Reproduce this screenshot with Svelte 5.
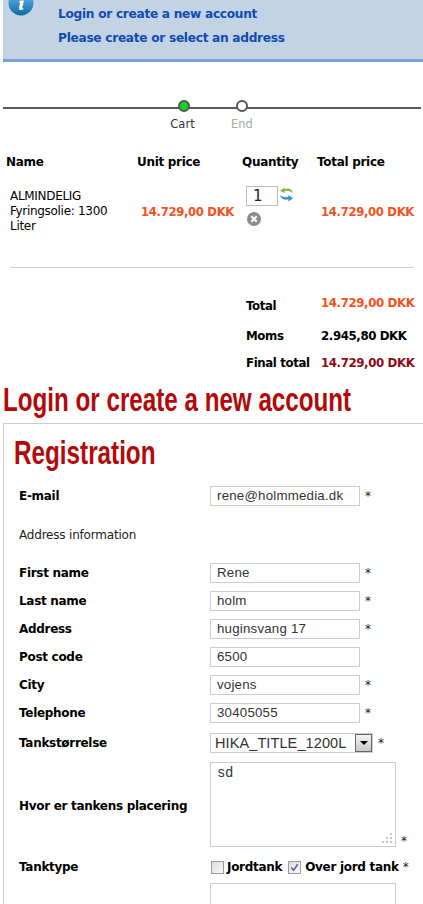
<script>
  const fields = [
    { label: "First name", value: "Rene", req: true },
    { label: "Last name", value: "holm", req: true },
    { label: "Address", value: "huginsvang 17", req: true },
    { label: "Post code", value: "6500", req: false },
    { label: "City", value: "vojens", req: true },
    { label: "Telephone", value: "30405055", req: true }
  ];
</script>

<div class="page">
  <!-- Info banner -->
  <div class="banner">
    <svg class="info" viewBox="0 0 26 26" width="26" height="26">
      <defs>
        <linearGradient id="ig" x1="0" y1="0" x2="0" y2="1">
          <stop offset="0" stop-color="#6fc0ea" />
          <stop offset="1" stop-color="#0d6aa8" />
        </linearGradient>
      </defs>
      <circle cx="13" cy="13" r="12.5" fill="url(#ig)" />
      <path d="M14.5 5.5h3.4l-.7 3h-3.4zM12.6 10.5h3.4l-1.700 7.200c-.1.5.3.6 1.200.2l-.2 1.400c-1.800.9-4.600 1-4.300-1.200l1.200-5.600-1 .1.2-1.400z" fill="#fff" />
    </svg>
    <p>Login or create a new account</p>
    <p>Please create or select an address</p>
  </div>

  <!-- Checkout steps -->
  <div class="steps">
    <div class="step"><span class="dot green"></span><span class="step-label">Cart</span></div>
    <div class="step end"><span class="dot"></span><span>End</span></div>
  </div>

  <!-- Cart -->
  <div class="cart-head">
    <span>Name</span>
    <span>Unit price</span>
    <span>Quantity</span>
    <span>Total price</span>
  </div>
  <div class="cart-row">
    <div class="item">ALMINDELIG<br />Fyringsolie: 1300<br />Liter</div>
    <div class="price">14.729,00 DKK</div>
    <div class="qty">
      <div class="qty-top">
        <span class="qty-box">1</span>
        <svg viewBox="0 0 16 16" width="15" height="16">
          <path d="M15 7C14 3 10 1 6 3V1L1 4.500 6 7V5c3-1 6 0 9 2z" fill="#7fb33c" />
          <path d="M1 9c3 2 6 3 9 2V9l5 3.500-5 3.500v-2.300C6 15 2 13 1 9z" fill="#3b8fd6" />
        </svg>
      </div>
      <svg class="remove" viewBox="0 0 14 14" width="14" height="14">
        <circle cx="7" cy="7" r="7" fill="#8c8c8c" />
        <path d="M4.300 4.300l5.400 5.400M9.700 4.300l-5.400 5.400" stroke="#fff" stroke-width="2" />
      </svg>
    </div>
    <div class="price">14.729,00 DKK</div>
  </div>
  <hr />

  <div class="sums">
    <div class="sum s1"><b>Total</b><b class="orange">14.729,00 DKK</b></div>
    <div class="sum s2"><b>Moms</b><b>2.945,80 DKK</b></div>
    <div class="sum s3"><b>Final total</b><b class="dark">14.729,00 DKK</b></div>
  </div>

  <h1><span>Login or create a new account</span></h1>

  <!-- Registration form -->
  <div class="box">
    <h2><span>Registration</span></h2>
    <div class="row">
      <label>E-mail</label>
      <span class="input">rene@holmmedia.dk</span>
      <span class="star">*</span>
    </div>
    <div class="section">Address information</div>
    {#each fields as f}
      <div class="row">
        <label>{f.label}</label>
        <span class="input">{f.value}</span>
        {#if f.req}<span class="star">*</span>{/if}
      </div>
    {/each}
    <div class="row select-row">
      <label>Tankstørrelse</label>
      <span class="select">
        HIKA_TITLE_1200L
        <span class="arrow"></span>
      </span>
      <span class="star">*</span>
    </div>
    <div class="row area-row">
      <label>Hvor er tankens placering</label>
      <span class="area">sd
        <svg viewBox="0 0 12 12" width="12" height="12">
          <g fill="#c4c4c4">
            <rect x="9" y="1" width="2" height="2" /><rect x="5" y="5" width="2" height="2" />
            <rect x="9" y="5" width="2" height="2" /><rect x="1" y="9" width="2" height="2" />
            <rect x="5" y="9" width="2" height="2" /><rect x="9" y="9" width="2" height="2" />
          </g>
        </svg>
      </span>
      <span class="star">*</span>
    </div>
    <div class="row check-row">
      <label>Tanktype</label>
      <span class="checks">
        <span class="check"></span><b>Jordtank</b>
        <span class="check on">
          <svg viewBox="0 0 12 12" width="11" height="11"><path d="M2.500 6l2.500 3 4.500-6.500" fill="none" stroke="#4a5fa8" stroke-width="1.600" /></svg>
        </span><b>Over jord tank</b>
        <span class="star">*</span>
      </span>
    </div>
    <div class="row last-row">
      <label></label>
      <span class="area"></span>
    </div>
  </div>
</div>

<style>
  :global(body) {
    margin: 0;
    background: #fff;
  }

  .page {
    width: 423px;
    height: 904px;
    overflow: hidden;
    position: relative;
    font-family: "DejaVu Sans", sans-serif;
    font-size: 12px;
    color: #000;
  }

  .banner {
    margin-left: 3px;
    height: 59px;
    background: #c3d3e6;
    border-bottom: 3px solid #7ba0cf;
    padding-left: 55px;
    position: relative;
  }

  .banner p {
    margin: 0;
    padding-top: 6px;
    height: 18px;
    line-height: 16px;
    font-size: 12.2px;
    font-weight: bold;
    color: #0f4cad;
    letter-spacing: -0.3px;
  }

  .info {
    position: absolute;
    left: 5px;
    top: -10px;
  }

  .steps {
    margin: 39px 2px 0 3px;
    height: 6px;
    border-bottom: 2px solid #5a5a5a;
    display: flex;
    gap: 8px;
    padding-left: 156px;
    align-items: flex-start;
  }

  .step {
    width: 50px;
    display: flex;
    flex-direction: column;
    align-items: center;
    gap: 5px;
    font-size: 11.5px;
    line-height: 14px;
    color: #333;
  }

  .step-label {
    margin-left: -3px;
  }

  .step.end {
    color: #aaa;
  }

  .dot {
    width: 8px;
    height: 8px;
    border: 2px solid #555;
    border-radius: 50%;
    background: #fff;
    margin-top: -1px;
  }

  .dot.green {
    background: #12d41c;
  }

  .cart-head,
  .cart-row {
    display: grid;
    grid-template-columns: 131px 105px 75px auto;
  }

  .cart-head {
    margin-top: 45px;
    height: 27px;
    padding-left: 6px;
    font-weight: bold;
    letter-spacing: -0.3px;
    line-height: 16px;
  }

  .cart-row {
    align-items: center;
    padding-left: 10px;
    height: 61px;
  }

  .item {
    line-height: 15px;
    letter-spacing: -0.3px;
  }

  .price {
    color: #f4511e;
    font-weight: bold;
    font-size: 11.6px;
    letter-spacing: -0.3px;
    white-space: nowrap;
  }

  .qty {
    align-self: start;
    margin-top: 5px;
  }

  .qty-top {
    display: flex;
    gap: 1px;
  }

  .qty-box {
    width: 32px;
    height: 20px;
    box-sizing: border-box;
    border: 1px solid #bbb;
    padding-left: 6px;
    font-size: 15px;
    line-height: 19px;
    color: #222;
  }

  .remove {
    display: block;
    margin-top: 6px;
    margin-left: 1px;
  }

  hr {
    margin: 25px 9px 0 10px;
    border: 0;
    border-top: 1px solid #ccc;
    height: 0;
  }

  .sums {
    padding-left: 246px;
    margin-top: 27px;
  }

  .sum {
    display: flex;
    font-size: 11.8px;
    letter-spacing: -0.4px;
    line-height: 16px;
  }

  .sum b:first-child {
    width: 75px;
  }

  .s1 { height: 33px; }
  .s2 { height: 27px; }
  .s3 { height: 16px; }

  .s1 b:first-child {
    padding-top: 3px;
  }

  .orange { color: #f4511e; }
  .dark { color: #8e0a14; }

  h1, h2 {
    margin: 0;
    color: #b20a0a;
    font-family: "Liberation Sans", sans-serif;
    font-weight: bold;
    white-space: nowrap;
  }

  h1 span, h2 span {
    display: inline-block;
    transform-origin: left center;
  }

  h1 {
    font-size: 33px;
    line-height: 40px;
    margin-top: 9px;
    margin-left: 3px;
  }

  h1 span {
    transform: scaleX(0.733);
  }

  .box {
    margin: 3px 0 0 3px;
    border: 1px solid #ccc;
    border-right: 0;
    padding-left: 15px;
    height: 600px;
  }

  h2 {
    font-size: 33px;
    line-height: 40px;
    margin-left: -5px;
    margin-top: 9px;
    margin-bottom: 13px;
  }

  h2 span {
    transform: scaleX(0.735);
  }

  .row {
    display: flex;
    align-items: center;
    height: 20px;
    margin-bottom: 8px;
    font-weight: bold;
    letter-spacing: -0.3px;
  }

  label {
    width: 191px;
    flex: none;
  }

  .area-row label {
    padding-top: 2px;
  }

  .input {
    width: 150px;
    height: 20px;
    box-sizing: border-box;
    border: 1px solid #ccc;
    padding-left: 6px;
    font-family: "Liberation Sans", sans-serif;
    font-size: 13.3px;
    font-weight: normal;
    letter-spacing: 0.2px;
    line-height: 18px;
    color: #333;
    white-space: nowrap;
  }

  .star {
    margin-left: 5px;
    margin-top: 2px;
    font-weight: normal;
    color: #222;
    align-self: flex-start;
    line-height: 16px;
  }

  .section {
    height: 49px;
    padding-top: 13px;
    box-sizing: border-box;
    line-height: 16px;
    letter-spacing: -0.2px;
    color: #222;
  }

  .select {
    width: 163px;
    height: 20px;
    box-sizing: border-box;
    border: 1px solid #ccc;
    padding-left: 4px;
    font-family: "Liberation Sans", sans-serif;
    font-size: 14.5px;
    font-weight: normal;
    line-height: 19px;
    letter-spacing: 0.1px;
    color: #333;
    position: relative;
    white-space: nowrap;
  }

  .arrow {
    position: absolute;
    right: 0;
    top: 0;
    width: 17px;
    height: 18px;
    box-sizing: border-box;
    border: 1px solid #666;
    background: linear-gradient(#f4f4f4, #c8c8c8);
  }

  .arrow::after {
    content: "";
    position: absolute;
    left: 4px;
    top: 6px;
    border: 4px solid transparent;
    border-top: 4px solid #000;
  }

  .select-row {
    margin-top: 10px;
    margin-bottom: 9px;
  }

  .area-row {
    height: 85px;
    margin-bottom: 10px;
  }

  .area {
    width: 186px;
    height: 85px;
    box-sizing: border-box;
    border: 1px solid #ccc;
    padding: 2px 6px;
    font-family: "Liberation Mono", monospace;
    font-size: 14px;
    font-weight: normal;
    color: #333;
    position: relative;
    flex: none;
  }

  .area svg {
    position: absolute;
    right: 2px;
    bottom: 2px;
  }

  .area-row .star {
    align-self: flex-end;
    margin-bottom: -2px;
  }

  .check-row {
    margin-bottom: 6px;
  }

  .checks {
    display: flex;
    align-items: center;
    white-space: nowrap;
    font-size: 12px;
    padding-left: 1px;
  }

  .check {
    width: 13px;
    height: 13px;
    box-sizing: border-box;
    border: 1px solid #9a9a9a;
    background: linear-gradient(135deg, #ddd, #fafafa);
    margin-right: 3px;
    display: flex;
    align-items: center;
    justify-content: center;
    flex: none;
  }

  .check.on {
    margin-left: 6px;
    margin-right: 4px;
  }

  .checks .star {
    margin-left: 4px;
    margin-top: 0;
    align-self: center;
  }

  .last-row {
    height: 85px;
  }
</style>
